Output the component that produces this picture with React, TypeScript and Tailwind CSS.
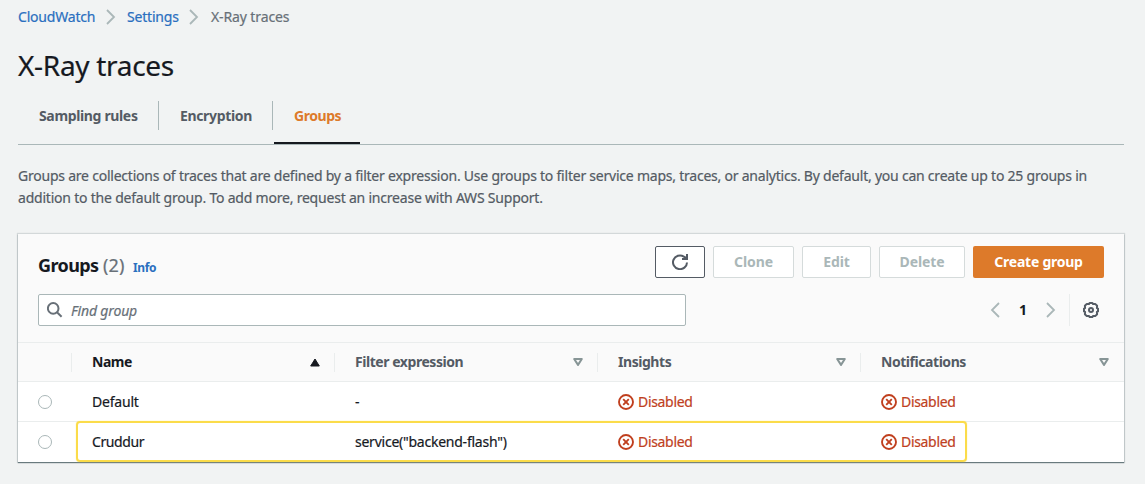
import React from 'react';

function Chevron({ flip = false, className = '' }: { flip?: boolean; className?: string }) {
  return (
    <svg width="16" height="16" viewBox="0 0 16 16" fill="none" stroke="#aab7b8" strokeWidth="1.8" className={className}>
      <path d={flip ? 'M12 1 L5 8 L12 15' : 'M4 1 L11 8 L4 15'} />
    </svg>
  );
}

function ErrorIcon() {
  return (
    <svg width="16" height="16" viewBox="0 0 16 16" fill="none" stroke="#c03f1e" strokeWidth="1.9" className="shrink-0">
      <circle cx="8" cy="8" r="7" />
      <path d="M5.2 5.2 L10.8 10.8 M10.8 5.2 L5.2 10.8" />
    </svg>
  );
}

function Disabled() {
  return (
    <span className="flex items-center gap-1 text-[#c03f1e]">
      <ErrorIcon />
      <span className="tracking-[-0.32px]">Disabled</span>
    </span>
  );
}

function SortIcon({ active = false }: { active?: boolean }) {
  return active ? (
    <svg width="10" height="9" viewBox="0 0 10 9" fill="#16191f" stroke="#16191f" strokeWidth="1" strokeLinejoin="round">
      <path d="M5 1 L9.3 8 L0.7 8 Z" />
    </svg>
  ) : (
    <svg width="10" height="8" viewBox="0 0 10 8" fill="none" stroke="#879596" strokeWidth="2" strokeLinejoin="round">
      <path d="M1.2 1 L8.8 1 L5 6.9 Z" />
    </svg>
  );
}

const columns = ['Name', 'Filter expression', 'Insights', 'Notifications'];
const rows = [
  { name: 'Default', filter: '-' },
  { name: 'Cruddur', filter: 'service("backend-flash")' },
];
const grid = 'grid grid-cols-[54px_263px_263px_263px_263px]';

export default function App() {
  return (
    <div className="h-[484px] w-[1145px] overflow-hidden bg-[#f1f3f3] pl-[18px] pr-[21px] pt-[6px] font-['Noto_Sans',sans-serif] text-[14px] leading-[22px] text-[#16191f] [-webkit-text-stroke:0.2px]">
      <nav className="flex h-[22px] items-center text-[#2a6fbf]">
        <a className="w-[77px] whitespace-nowrap tracking-[-0.2px]">CloudWatch</a>
        <Chevron className="ml-[8px] mr-[8px]" />
        <a className="w-[52px] whitespace-nowrap tracking-[-0.2px]">Settings</a>
        <Chevron className="ml-[7px] mr-[9px]" />
        <span className="whitespace-nowrap tracking-[-0.12px] text-[#687078]">X-Ray traces</span>
      </nav>

      <h1 className="mt-[19px] h-[36px] whitespace-nowrap text-[28px] leading-[36px] tracking-[-0.3px]">X-Ray traces</h1>

      <div className="mt-[18px] flex h-[44px] border-b border-[#aab7b8] font-bold text-[#545b64] [-webkit-text-stroke:0px]">
        <div className="flex h-[29px] w-[141px] items-center border-r border-[#aab7b8] pl-[21px] tracking-[-0.35px]">Sampling rules</div>
        <div className="flex h-[29px] w-[114px] items-center border-r border-[#aab7b8] pl-[21px] tracking-[-0.35px]">Encryption</div>
        <div className="ml-px h-[43px] w-[86px] border-b-2 border-[#16191f] pl-[20px] leading-[29px] tracking-[-0.45px] text-[#dd7a2a]">Groups</div>
      </div>

      <p className="mt-[20px] whitespace-nowrap tracking-[-0.226px] text-[#545b64]">
        Groups are collections of traces that are defined by a filter expression. Use groups to filter service maps, traces, or analytics. By default, you can create up to 25 groups in
        <br />
        <span className="tracking-[-0.21px]">addition to the default group. To add more, request an increase with AWS Support.</span>
      </p>

      <section className="mt-[25px] h-[228px] bg-white shadow-[0_1px_1px_0_rgba(0,28,36,0.5),0_0_1px_1px_rgba(0,28,36,0.12)]">
        <header className="h-[109px] border-b border-[#eaeded] bg-[#fafafa] px-[20px] pt-[12px]">
          <div className="flex h-[32px] items-center">
            <h2 className="mt-[8px] flex flex-1 items-baseline whitespace-nowrap">
              <span className="w-[60px] text-[18px] font-bold tracking-[-0.6px] [-webkit-text-stroke:0px]">Groups</span>
              <span className="ml-[5px] w-[21px] text-[18px] tracking-[0.2px] text-[#687078]">(2)</span>
              <a className="ml-[9px] text-[12px] font-bold tracking-[-0.35px] text-[#2a6fbf] [-webkit-text-stroke:0px]">Info</a>
            </h2>
            <div className="flex gap-2 font-bold tracking-[-0.1px] text-[#aab7b8] [-webkit-text-stroke:0px]">
              <button className="flex h-[32px] w-[50px] items-center justify-center rounded-[2px] border border-[#545b64] bg-white">
                <svg width="16" height="16" viewBox="0 0 16 16" fill="none" stroke="#545b64" strokeWidth="2">
                  <path d="M15 8.4 A7 6.8 0 1 1 11.8 2.6 L14 4.6" />
                  <path d="M15 0 V5 H10" />
                  <path d="M15.5 0.5 V5.5 H10.5 Z" fill="#545b64" stroke="none" />
                </svg>
              </button>
              <button className="h-[32px] w-[81px] rounded-[2px] border border-[#d5dbdb] bg-white">Clone</button>
              <button className="h-[32px] w-[69px] rounded-[2px] border border-[#d5dbdb] bg-white">Edit</button>
              <button className="h-[32px] w-[86px] rounded-[2px] border border-[#d5dbdb] bg-white">Delete</button>
              <button className="h-[32px] w-[131px] rounded-[2px] bg-[#dd7a2a] tracking-[-0.25px] text-white">Create group</button>
            </div>
          </div>
          <div className="mt-[16px] flex h-[32px] items-center">
            <div className="flex h-[32px] w-[648px] items-center rounded-[2px] border border-[#aab7b8] bg-white pl-[8px]">
              <svg width="16" height="16" viewBox="0 0 16 16" fill="none" stroke="#687078" strokeWidth="2">
                <circle cx="6.2" cy="6.4" r="5.3" />
                <path d="M10 10.2 L14.6 14.8" />
              </svg>
              <span className="ml-[8px] mt-px italic tracking-[-0.16px] text-[#687078]">Find group</span>
            </div>
            <div className="ml-auto flex h-[32px] items-center">
              <Chevron flip />
              <span className="w-[40px] text-center font-bold [-webkit-text-stroke:0px]">1</span>
              <Chevron />
              <div className="ml-[10px] h-[32px] w-px bg-[#eaeded]" />
              <svg width="16" height="16" viewBox="0 0 16 16" fill="none" stroke="#545b64" strokeWidth="2" strokeLinejoin="round" className="ml-[13px] mr-[5px]">
                <path d="M6.6 1 H9.4 L10 2.1 L12.2 1.9 L14.1 3.8 L13.9 6 L15 6.6 V9.4 L13.9 10 L14.1 12.2 L12.2 14.1 L10 13.9 L9.4 15 H6.6 L6 13.9 L3.8 14.1 L1.9 12.2 L2.1 10 L1 9.4 V6.6 L2.1 6 L1.9 3.8 L3.8 1.9 L6 2.1 Z" />
                <circle cx="8" cy="8" r="2" />
              </svg>
            </div>
          </div>
        </header>

        <div className={`${grid} h-[39px] items-center border-b border-[#eaeded] bg-[#fafafa] font-bold text-[#545b64] [-webkit-text-stroke:0px]`}>
          <div className="h-[19px] border-r border-[#eaeded]" />
          {columns.map((c, i) => (
            <div key={c} className={`flex h-[19px] items-center justify-between whitespace-nowrap pl-[20px] tracking-[-0.45px] ${i < 3 ? 'border-r border-[#eaeded] pr-[14px]' : 'pr-[15px]'} ${i === 0 ? 'text-[#16191f]' : ''}`}>
              {c}
              <SortIcon active={i === 0} />
            </div>
          ))}
        </div>

        {rows.map((r, i) => (
          <div key={r.name} className={`${grid} relative h-[40px] items-center ${i === 0 ? 'border-b border-[#eaeded]' : ''}`}>
            <div className="pl-[20px]">
              <div className="h-[14px] w-[14px] rounded-full border border-[#aab7b8] bg-white" />
            </div>
            <div className={`pl-[20px] ${i === 0 ? 'tracking-[-0.2px]' : 'tracking-[-0.4px]'}`}>{r.name}</div>
            <div className="pl-[20px] tracking-[-0.24px]">{r.filter}</div>
            <div className="pl-[20px]"><Disabled /></div>
            <div className="pl-[20px]"><Disabled /></div>
            {i === 1 && <div className="absolute left-[58px] top-[-1px] h-[41px] w-[891px] rounded-[4px] border-2 border-[#fbdc4a] shadow-[0_0_1px_0_#fbdc4a]" />}
          </div>
        ))}
      </section>
    </div>
  );
}
